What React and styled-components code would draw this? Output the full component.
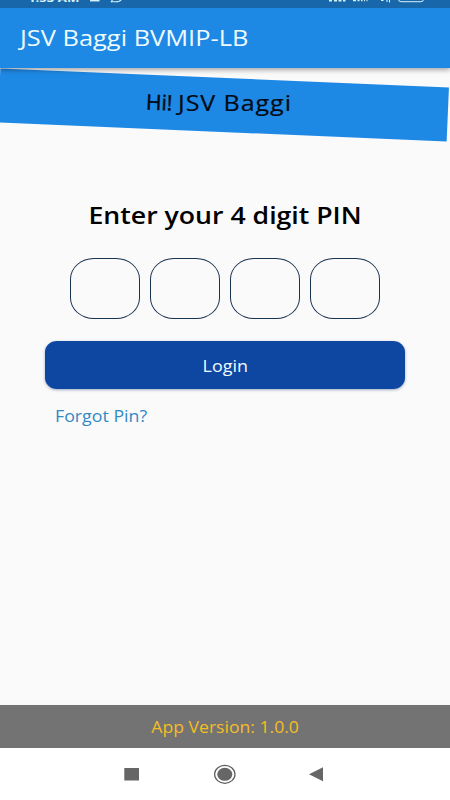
import styled, { createGlobalStyle } from "styled-components";

function App() {
  return (
    <>
      <GlobalStyle />
      <Screen>
        <StatusBar>
          <Clock>1:53 AM</Clock>
          <StatusIcons />
        </StatusBar>
        <AppBar>
          <Title>JSV Baggi BVMIP-LB</Title>
        </AppBar>
        <Content>
          <Banner>
            <Greeting>
              <Hi>Hi!</Hi>
              <Name>JSV Baggi</Name>
            </Greeting>
          </Banner>
          <Heading>
            <Stretch $x={1.11}>Enter your 4 digit PIN</Stretch>
          </Heading>
          <PinRow>
            {[0, 1, 2, 3].map((digit) => (
              <PinBox key={digit} />
            ))}
          </PinRow>
          <LoginButton>
            <Stretch $x={1.12}>Login</Stretch>
          </LoginButton>
          <ForgotLink>Forgot Pin?</ForgotLink>
        </Content>
        <Version>
          <Stretch $x={1.1}>App Version: 1.0.0</Stretch>
        </Version>
        <NavBar>
          <NavIcons />
        </NavBar>
      </Screen>
    </>
  );
}

export default App;

function StatusIcons() {
  return (
    <StatusSvg viewBox="0 0 450 8" fill="none" stroke="#d5f2fb">
      <path d="M90 0.7h9.500" strokeWidth="1.5" />
      <path d="M111 2.300l1.500-2.600M111 1.700h3.500q6 0.300 7.500-3" strokeWidth="1.100" />
      <path
        d="M329 0.700h3M334 0.700h3M338.500 0.700h3M343 0.700h2.500M353 0.600h3M357.500 0.600h2M361 0.600h1.500M364 0.600h1M366.500 0.600h1"
        strokeWidth="1.500"
      />
      <path d="M381 0.500h2.500M387 0v2M389.500 0v2.500" strokeWidth="1.100" />
      <rect x="398.500" y="-8" width="25" height="9.700" rx="2.500" />
    </StatusSvg>
  );
}

function NavIcons() {
  return (
    <svg width="450" height="52" viewBox="0 748 450 52" fill="#666">
      <rect x="124.300" y="768" width="14.700" height="12.500" />
      <ellipse cx="224.800" cy="774.300" rx="7.500" ry="6.500" />
      <ellipse
        cx="224.800"
        cy="774.300"
        rx="10.200"
        ry="9"
        fill="none"
        stroke="#5c5c5c"
        strokeWidth="1.200"
      />
      <path d="M309 774.300L323 767.300V781.300Z" />
    </svg>
  );
}

const GlobalStyle = createGlobalStyle`
  body {
    margin: 0;
    background: #fafafa;
    font-family: "Open Sans", "Noto Sans", sans-serif;
  }
`;

const Screen = styled.div`
  display: flex;
  flex-direction: column;
  width: 450px;
  height: 800px;
  overflow: hidden;
`;

const Stretch = styled.span`
  display: inline-block;
  white-space: nowrap;
  transform: scaleX(${(props) => props.$x});
`;

const StatusBar = styled.div`
  position: relative;
  z-index: 2;
  flex: none;
  height: 8px;
  overflow: hidden;
  background: #1967ab;
`;

const Clock = styled.div`
  margin: -10px 0 0 28px;
  width: fit-content;
  color: #d5f2fb;
  font-size: 11px;
  font-weight: 700;
  line-height: 16px;
  transform: scaleX(1.2);
  transform-origin: left;
`;

const StatusSvg = styled.svg`
  position: absolute;
  top: 0;
  left: 0;
  width: 450px;
  height: 8px;
`;

const AppBar = styled.header`
  position: relative;
  z-index: 1;
  box-sizing: border-box;
  display: flex;
  flex: none;
  align-items: center;
  height: 60px;
  padding: 0 0 2px 20px;
  background: #1e88e5;
  box-shadow: 0 2px 5px rgba(0, 0, 0, 0.35);
`;

const Title = styled.h1`
  margin: 0;
  color: #effcff;
  font-size: 22px;
  font-weight: 400;
  line-height: 30px;
  white-space: nowrap;
  transform: scaleX(1.155);
  transform-origin: left;
`;

const Content = styled.main`
  flex: 1;
  background: #fafafa;
`;

const Banner = styled.div`
  display: flex;
  align-items: center;
  justify-content: center;
  width: 449px;
  height: 53.5px;
  margin: 10px 0 0 -1px;
  background: #1e88e5;
  transform: rotate(2.45deg);
`;

const Greeting = styled.div`
  display: flex;
  gap: 6px;
  width: 155px;
  padding-bottom: 5px;
  color: #020a14;
  line-height: 30px;
  white-space: nowrap;
  transform: rotate(-2.45deg);
`;

const Hi = styled.span`
  font-size: 21px;
  font-weight: 500;
  -webkit-text-stroke: 0.5px #020a14;
  transform: rotate(2.45deg);
`;

const Name = styled.span`
  font-size: 22px;
  font-weight: 500;
  letter-spacing: 0.8px;
  -webkit-text-stroke: 0.2px #020a14;
  transform: scaleX(1.14);
  transform-origin: left;
`;

const Heading = styled.h2`
  margin: 66.5px 0 0;
  color: #000;
  font-size: 24px;
  font-weight: 600;
  line-height: 34px;
  text-align: center;
`;

const PinRow = styled.div`
  display: flex;
  justify-content: center;
  gap: 10px;
  margin-top: 26px;
`;

const PinBox = styled.div`
  box-sizing: border-box;
  width: 70px;
  height: 61px;
  border: 1px solid #17334f;
  border-radius: 24px / 21px;
`;

const LoginButton = styled.button`
  box-sizing: border-box;
  display: block;
  width: 360px;
  height: 48px;
  margin: 22px auto 0;
  padding: 2px 0 0;
  border: 0;
  border-radius: 12px / 11px;
  background: #0d47a1;
  box-shadow: 0 1px 3px rgba(13, 50, 110, 0.4);
  color: #f1fbff;
  font-family: inherit;
  font-size: 16px;
  font-weight: 500;
`;

const ForgotLink = styled.a`
  display: block;
  width: fit-content;
  margin: 16px 0 0 55px;
  color: #3289c4;
  font-size: 16px;
  font-weight: 500;
  line-height: 22px;
  transform: scaleX(1.11);
  transform-origin: left;
`;

const Version = styled.footer`
  box-sizing: border-box;
  display: flex;
  flex: none;
  align-items: center;
  justify-content: center;
  height: 43px;
  background: #737373;
  color: #f5bd23;
  font-size: 16px;
`;

const NavBar = styled.nav`
  flex: none;
  height: 52px;
  background: #fff;
`;
